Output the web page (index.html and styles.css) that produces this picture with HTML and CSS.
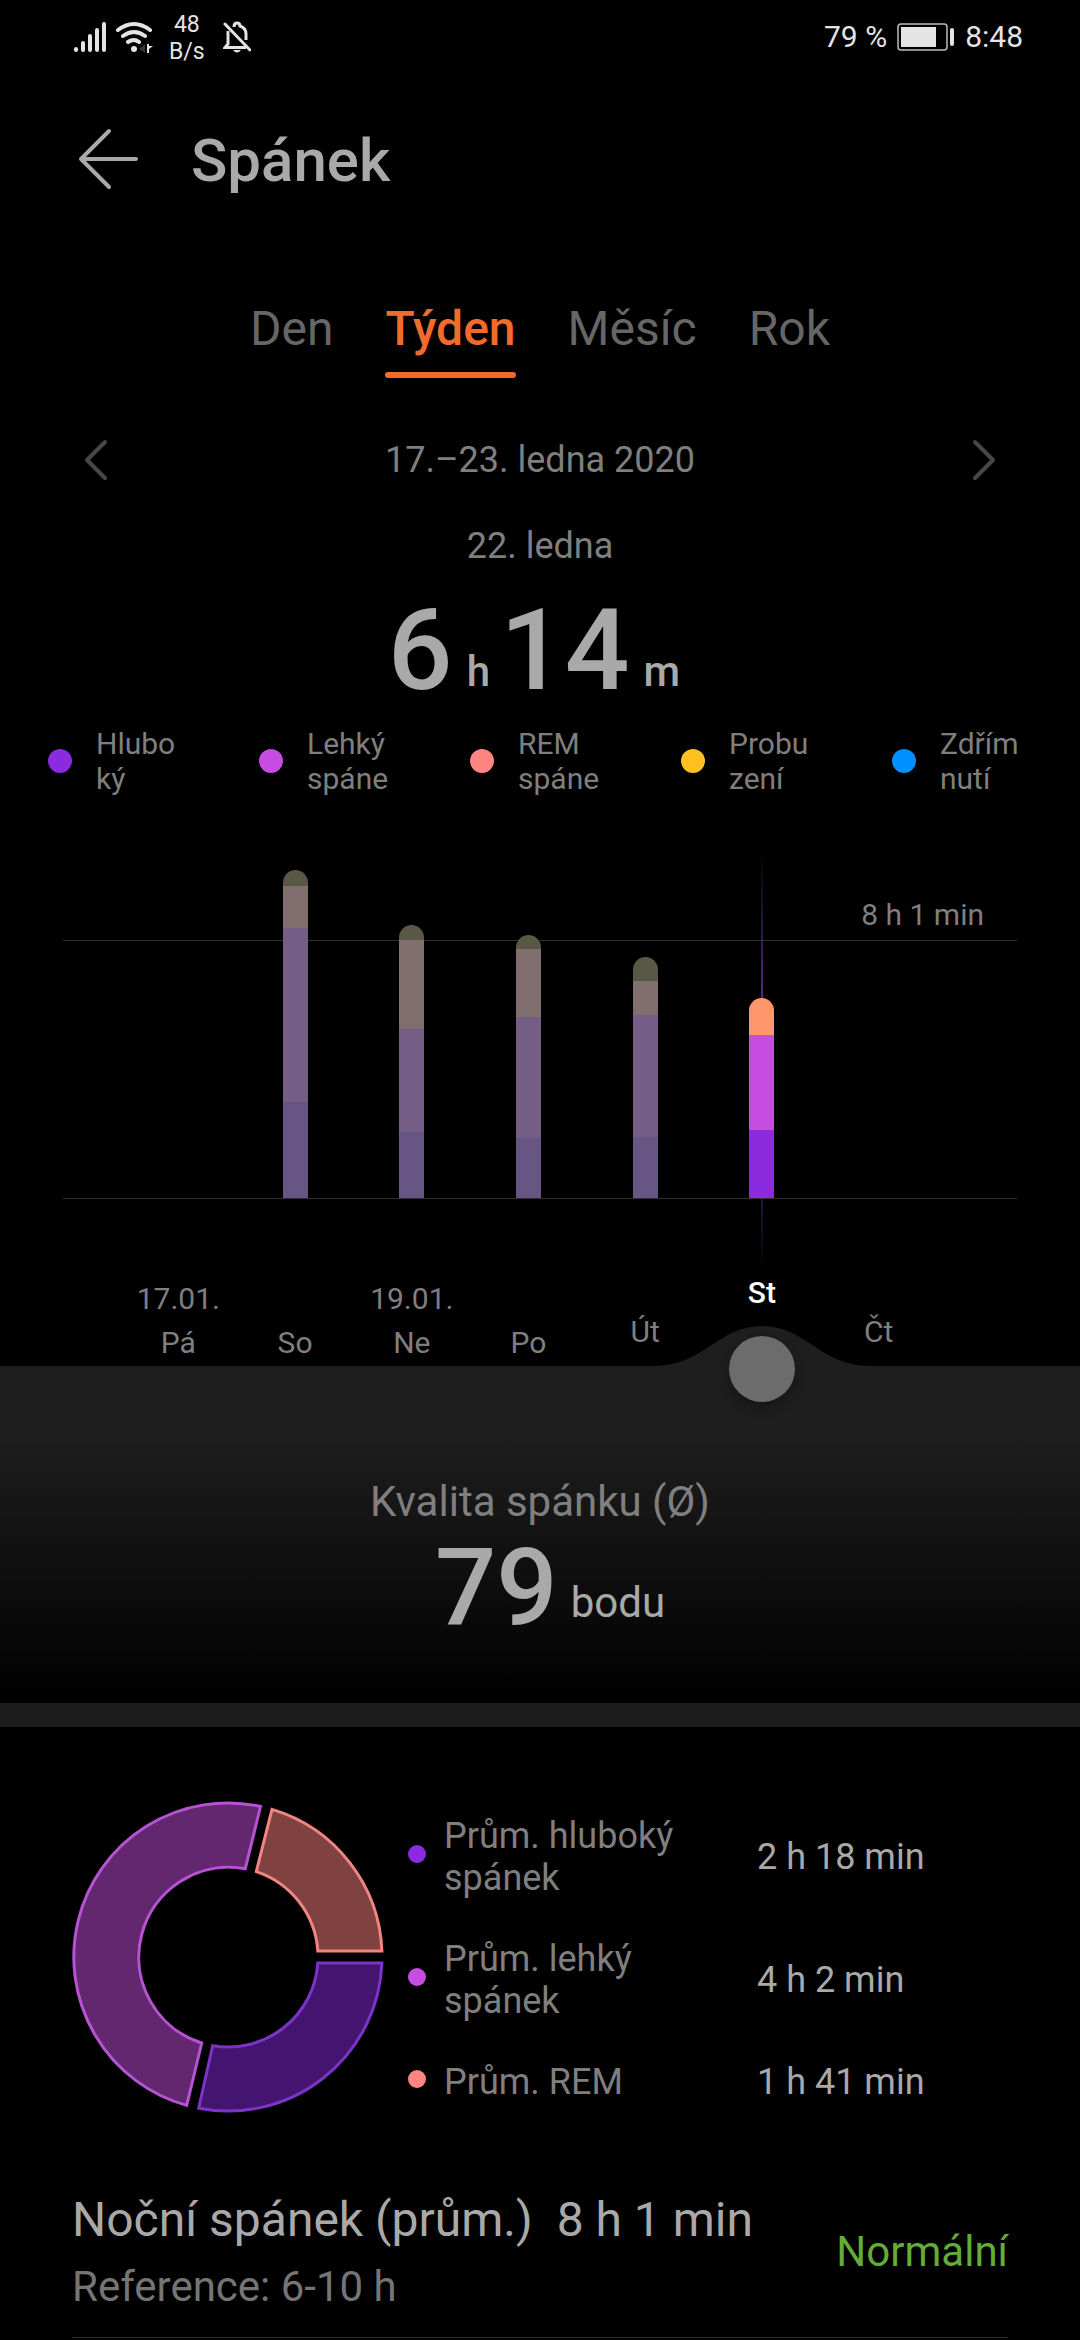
FILE: index.html
```html
<!DOCTYPE html>
<html lang="cs">
<head>
<meta charset="utf-8">
<meta name="viewport" content="width=device-width, initial-scale=1">
<title>Spánek</title>
<link rel="stylesheet" href="styles.css">
</head>
<body>
<div class="status">
  <svg class="status-signal" width="34" height="32" viewBox="0 0 34 32" stroke="#e4e4e4" stroke-width="4" stroke-linecap="round" aria-hidden="true"><path d="M3 28v1M10 22v7M17 15v14M24 9v20M31 3v26"/></svg>
  <svg class="status-wifi" width="38" height="32" viewBox="0 0 38 32" fill="none" stroke="#e4e4e4" stroke-width="4" stroke-linecap="round" aria-hidden="true"><path d="M3 9Q19-3 35 9M8 15Q19 7 30 15M13 21Q19 17 24 21"/><circle cx="19" cy="28" r="3" fill="#e4e4e4" stroke="none"/><path d="M30 23v9l-6-4z" fill="#333" stroke="none"/><path d="M32 23v9h2v-4l4-3h-4v-2z" fill="#e4e4e4" stroke="none"/></svg>
  <div class="status-rate">48<br>B/s</div>
  <svg class="status-bell" width="28" height="32" viewBox="0 0 28 32" fill="none" stroke="#e4e4e4" stroke-width="3" aria-hidden="true"><path d="M2 3 27 29" stroke-linecap="round"/><path d="M5 10v13l-3 3.500H23M11 6q0-4 3-4t3 3q6 2 6 8v6"/><path d="M10 29h8q-4 5-8 0z" fill="#e4e4e4" stroke="none"/></svg>
  <span class="status-level">79 %</span>
  <svg class="status-battery" width="58" height="28" viewBox="0 0 58 28" aria-hidden="true"><rect x="1" y="1" width="49" height="26" rx="3" fill="none" stroke="#bbb" stroke-width="1.500"/><rect x="4" y="4" width="35" height="20" fill="#e4e4e4"/><rect x="53" y="5" width="4" height="18" rx="2" fill="#e4e4e4"/></svg>
  <span class="status-time">8:48</span>
</div>

<header class="header">
  <button class="icon-button" aria-label="Zpět"><svg width="60" height="62" viewBox="0 0 60 62" fill="none" stroke="#a9a9a9" stroke-width="4" stroke-linecap="round" stroke-linejoin="round"><path d="M31 3 3 31 31 59M3 31H58"/></svg></button>
  <h1>Spánek</h1>
</header>

<nav class="tabs">
  <button class="tab">Den</button>
  <button class="tab tab-active">Týden</button>
  <button class="tab">Měsíc</button>
  <button class="tab">Rok</button>
</nav>

<div class="period">
  <button class="icon-button" aria-label="Předchozí týden"><svg width="24" height="42" viewBox="0 0 24 42" fill="none" stroke="#484848" stroke-width="4" stroke-linecap="round" stroke-linejoin="round"><path d="M21 3 3 21 21 39"/></svg></button>
  <span>17.–23. ledna 2020</span>
  <button class="icon-button" aria-label="Další týden"><svg width="24" height="42" viewBox="0 0 24 42" fill="none" stroke="#484848" stroke-width="4" stroke-linecap="round" stroke-linejoin="round"><path d="M3 3 21 21 3 39"/></svg></button>
</div>

<section class="summary">
  <p class="summary-date">22. ledna</p>
  <p class="summary-value"><b>6</b><span>h</span><b>14</b><span>m</span></p>
</section>

<ul class="legend">
  <li><i class="dot deep"></i><span>Hlubo<br>ký</span></li>
  <li><i class="dot light"></i><span>Lehký<br>spáne</span></li>
  <li><i class="dot rem"></i><span>REM<br>spáne</span></li>
  <li><i class="dot awake"></i><span>Probu<br>zení</span></li>
  <li><i class="dot nap"></i><span>Zdřím<br>nutí</span></li>
</ul>

<section class="chart">
  <div class="plot">
    <div class="average"><span>8 h 1 min</span></div>
    <div class="column"></div>
    <div class="column"><div class="bar"><i class="awake" style="height:16px"></i><i class="rem" style="height:42px"></i><i class="light" style="height:174px"></i><i class="deep" style="height:96px"></i></div></div>
    <div class="column"><div class="bar"><i class="awake" style="height:15px"></i><i class="rem" style="height:89px"></i><i class="light" style="height:103px"></i><i class="deep" style="height:66px"></i></div></div>
    <div class="column"><div class="bar"><i class="awake" style="height:14px"></i><i class="rem" style="height:68px"></i><i class="light" style="height:121px"></i><i class="deep" style="height:60px"></i></div></div>
    <div class="column"><div class="bar"><i class="awake" style="height:24px"></i><i class="rem" style="height:34px"></i><i class="light" style="height:122px"></i><i class="deep" style="height:61px"></i></div></div>
    <div class="column column-selected"><div class="bar"><i class="awake" style="height:37px"></i><i class="light" style="height:95px"></i><i class="deep" style="height:68px"></i></div></div>
    <div class="column"></div>
  </div>
  <div class="days">
    <div class="day"><span>17.01.</span><span>Pá</span></div>
    <div class="day"><span>So</span></div>
    <div class="day"><span>19.01.</span><span>Ne</span></div>
    <div class="day"><span>Po</span></div>
    <div class="day day-near"><span>Út</span></div>
    <div class="day day-selected"><span>St</span></div>
    <div class="day day-near"><span>Čt</span></div>
  </div>
</section>

<section class="quality">
  <div class="picker">
    <svg class="picker-bump" width="212" height="41" viewBox="0 0 212 41" fill="#1e1e1e" aria-hidden="true"><path d="M0 40C50 38 62 0 106 0S162 38 212 40V41H0z"/></svg>
    <input class="picker-range" type="range" min="0" max="6" value="5" aria-label="Den v týdnu">
  </div>
  <h2>Kvalita spánku (Ø)</h2>
  <p class="quality-value"><b>79</b><span>bodu</span></p>
</section>

<section class="averages">
  <svg class="donut" width="314" height="314" viewBox="-157 -157 314 314" stroke-width="3" aria-hidden="true">
    <path d="M44 -147.600A154 154 0 0 1 153.900 -6H89.800A90 90 0 0 0 28.300 -85.400z" fill="#7f4241" stroke="#f08581"/>
    <path d="M153.900 6A154 154 0 0 1 -29.300 151.200L-15.300 88.700A90 90 0 0 0 89.800 6z" fill="#441570" stroke="#7c33c8"/>
    <path d="M-41.300 148.400A154 154 0 0 1 32.500 -150.500L17.300 -88.300A90 90 0 0 0 -26.300 86z" fill="#632770" stroke="#b653d2"/>
  </svg>
  <dl class="averages-list">
    <div><dt><i class="dot deep"></i><span>Prům. hluboký spánek</span></dt><dd>2 h 18 min</dd></div>
    <div><dt><i class="dot light"></i><span>Prům. lehký spánek</span></dt><dd>4 h 2 min</dd></div>
    <div><dt><i class="dot rem"></i><span>Prům. REM</span></dt><dd>1 h 41 min</dd></div>
  </dl>
</section>

<section class="night">
  <div>
    <p class="night-title"><span>Noční spánek (prům.)</span><span>8 h 1 min</span></p>
    <p class="night-range">Reference: 6-10 h</p>
  </div>
  <span class="night-status">Normální</span>
</section>
</body>
</html>
```
FILE: styles.css
```css
* {
  box-sizing: border-box;
  margin: 0;
  padding: 0;
}

html {
  background: #000;
}

body {
  color: #7f7f7f;
  font: 36px/42px Roboto, sans-serif;
}

button {
  background: none;
  border: 0;
  color: inherit;
  font: inherit;
}

svg {
  display: block;
  flex: none;
}

b {
  font-weight: 500;
}

ul {
  list-style: none;
}

.status {
  display: flex;
  align-items: center;
  height: 74px;
  padding: 0 57px 0 73px;
  color: #e4e4e4;
  font-size: 30px;
}

.status-wifi {
  margin-left: 8px;
}

.status-rate {
  margin: 2px 18px 0 16px;
  font-size: 23px;
  line-height: 27px;
  text-align: center;
}

.status-level {
  margin-left: auto;
}

.status-battery {
  margin: 0 10px;
}

.header {
  display: flex;
  align-items: center;
  gap: 53px;
  height: 170px;
  padding: 0 78px;
}

h1 {
  padding-top: 4px;
  color: #a9a9a9;
  font-size: 60px;
  font-weight: 500;
  line-height: 70px;
}

.tabs {
  display: flex;
  justify-content: center;
  gap: 52px;
  margin-top: 57px;
  color: #666;
}

.tab {
  padding-bottom: 21px;
  font-size: 48px;
  line-height: 56px;
}

.tab-active {
  position: relative;
  color: #f26b2c;
  font-weight: 500;
}

.tab-active::after {
  position: absolute;
  inset: auto 0 0;
  height: 6px;
  border-radius: 3px;
  background: #f26b2c;
  content: "";
}

.period {
  display: flex;
  align-items: center;
  justify-content: space-between;
  height: 60px;
  margin: 52px 84px 0;
}

.summary {
  margin-top: 35px;
  text-align: center;
}

.summary-value,
.quality-value {
  display: flex;
  align-items: flex-end;
  justify-content: center;
  color: #a9a9a9;
}

.summary-value {
  gap: 10px;
  margin-top: 26px;
  padding-right: 12px;
}

.summary-value b {
  margin-right: 4px;
  font-size: 114px;
  line-height: 114px;
}

.summary-value span {
  margin-bottom: 14px;
  font-size: 42px;
  font-weight: 500;
}

.dot {
  flex: none;
  border-radius: 50%;
}

.deep {
  background: #8a2be2;
}

.light {
  background: #c64ce2;
}

.rem {
  background: #ff8582;
}

.awake {
  background: #ffc020;
}

.nap {
  background: #0090ff;
}

.legend {
  display: grid;
  grid-template-columns: repeat(4, 1fr) 140px;
  margin-top: 19px;
  padding: 0 48px;
  font-size: 30px;
  line-height: 35px;
}

.legend li {
  display: flex;
  align-items: center;
  gap: 24px;
}

.legend .dot {
  width: 24px;
  height: 24px;
}

.plot {
  position: relative;
  display: grid;
  grid-template-columns: repeat(7, 1fr);
  height: 349px;
  margin: 54px 63px 0;
  padding: 0 80px 0 57px;
  border-bottom: 1px solid #2f2f2f;
}

.average {
  position: absolute;
  inset: 45px 0 auto;
  padding: 0 33px 5px 0;
  border-bottom: 1px solid #2f2f2f;
  font-size: 30px;
  line-height: 40px;
  text-align: right;
}

.column {
  position: relative;
  display: flex;
  flex-direction: column;
  align-items: center;
  justify-content: flex-end;
}

.column-selected::before {
  position: absolute;
  inset: 0 auto -72px;
  width: 2px;
  background: linear-gradient(transparent, #5f2e9c 40%, #5f2e9c 60%, transparent);
  content: "";
}

.bar {
  position: relative;
  width: 25px;
  overflow: hidden;
  border-radius: 13px 13px 0 0;
}

.bar i {
  display: block;
}

.bar .deep {
  background: #675683;
}

.bar .light {
  background: #745e86;
}

.bar .rem {
  background: #806f6e;
}

.bar .awake {
  background: #595845;
}

.column-selected .deep {
  background: #8a2be0;
}

.column-selected .light {
  background: #c64ce2;
}

.column-selected .awake {
  background: #ff976b;
}

.days {
  display: grid;
  grid-template-columns: repeat(7, 1fr);
  height: 167px;
  padding: 0 143px 0 120px;
  font-size: 30px;
  line-height: 35px;
}

.day {
  display: flex;
  flex-direction: column;
  align-items: center;
  justify-content: flex-end;
  gap: 9px;
  padding-bottom: 6px;
}

.day-near {
  padding-bottom: 17px;
}

.day-selected {
  padding-bottom: 56px;
  color: #fff;
  font-weight: 500;
}

.quality {
  position: relative;
  padding: 111px 0 61px;
  border-bottom: 24px solid #1d1d1d;
  background: linear-gradient(#1e1e1e 20%, #000) padding-box;
  text-align: center;
}

.picker {
  position: absolute;
  inset: 0 143px auto 120px;
}

.picker-bump {
  position: absolute;
  top: -40px;
  left: calc(100% * 11 / 14);
  margin-left: -106px;
}

.picker-range {
  position: absolute;
  inset: -30px 25px auto;
  width: calc(100% - 50px);
  height: 66px;
  appearance: none;
  background: none;
}

.picker-range::-webkit-slider-thumb {
  width: 66px;
  height: 66px;
  appearance: none;
  border-radius: 50%;
  background: #6c6c6c;
  box-shadow: 0 6px 12px rgb(0 0 0 / 30%);
}

h2 {
  font-size: 42px;
  font-weight: 400;
  line-height: 50px;
}

.quality-value {
  gap: 13px;
  margin-top: 7px;
  padding-left: 20px;
}

.quality-value b {
  font-size: 108px;
  line-height: 108px;
}

.quality-value span {
  margin-bottom: 18px;
  font-size: 42px;
}

.averages {
  display: flex;
  gap: 23px;
  padding: 73px 72px 0 71px;
}

.averages-list {
  display: flex;
  flex: 1;
  flex-direction: column;
  gap: 39px;
  padding-top: 15px;
}

.averages-list div {
  display: grid;
  grid-template-columns: 285px 1fr;
  gap: 64px;
  align-items: center;
}

.averages-list dt {
  display: flex;
  align-items: center;
  gap: 18px;
}

.averages-list dd {
  color: #a9a9a9;
}

.averages-list .dot {
  width: 18px;
  height: 18px;
  margin-bottom: 6px;
}

.night {
  display: flex;
  align-items: center;
  justify-content: space-between;
  margin: 78px 72px 0;
  padding-bottom: 25px;
  border-bottom: 1px solid #2f2f2f;
  font-size: 42px;
  line-height: 50px;
}

.night-title {
  display: flex;
  gap: 24px;
  margin-bottom: 14px;
  color: #a9a9a9;
  font-size: 48px;
  line-height: 56px;
}

.night-range {
  color: #757575;
}

.night-status {
  color: #62ac38;
}
```
